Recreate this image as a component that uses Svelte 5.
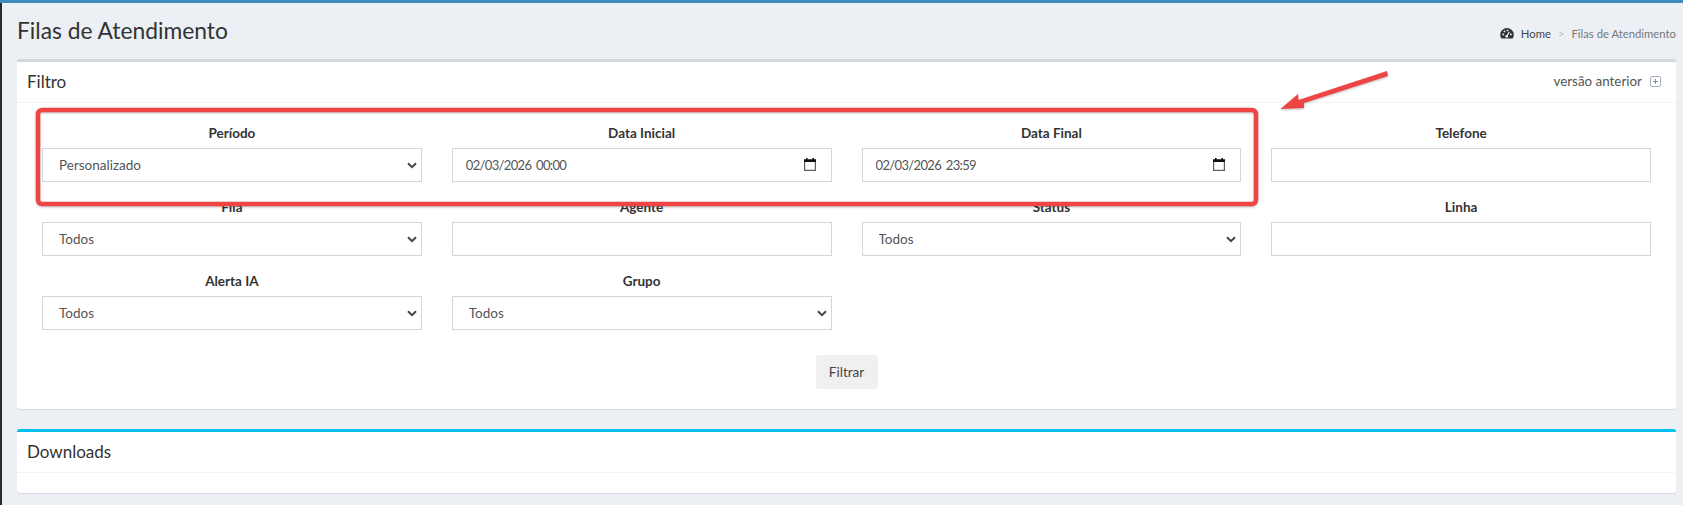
<script>
	const rows = [
		{ label: 'Período', type: 'select', value: 'Personalizado' },
		{ label: 'Data Inicial', type: 'date', value: '02/03/2026 00:00' },
		{ label: 'Data Final', type: 'date', value: '02/03/2026 23:59' },
		{ label: 'Telefone', type: 'text', value: '' },
		{ label: 'Fila', type: 'select', value: 'Todos' },
		{ label: 'Agente', type: 'text', value: '' },
		{ label: 'Status', type: 'select', value: 'Todos' },
		{ label: 'Linha', type: 'text', value: '' },
		{ label: 'Alerta IA', type: 'select', value: 'Todos' },
		{ label: 'Grupo', type: 'select', value: 'Todos' }
	];
</script>

<div class="page">
	<div class="topbar"></div>
	<div class="layout">
		<div class="sidebar"></div>
		<main>
			<header class="content-header">
				<h1>Filas de Atendimento</h1>
				<nav class="breadcrumb">
					<svg class="gauge" viewBox="0 0 16 13" width="14" height="11">
						<path fill="#333" d="M8 0a8 8 0 0 0-7 11.9c.2.4.6.6 1 .6h12c.4 0 .8-.2 1-.6A8 8 0 0 0 8 0z" />
						<circle cx="3.6" cy="7.6" r="1.1" fill="#ecf0f5" />
						<circle cx="5" cy="4" r="1.1" fill="#ecf0f5" />
						<circle cx="8.6" cy="2.8" r="1.1" fill="#ecf0f5" />
						<circle cx="12.6" cy="7.6" r="1.1" fill="#ecf0f5" />
						<path stroke="#ecf0f5" stroke-width="1.4" d="M7.6 10 10.8 4.6" />
						<circle cx="7.6" cy="10" r="1.6" fill="#ecf0f5" />
					</svg>
					<a href="#home">Home</a>
					<span class="sep">&gt;</span>
					<span class="current">Filas de Atendimento</span>
				</nav>
			</header>

			<section class="box filter">
				<div class="box-header">
					<h3>Filtro</h3>
					<div class="tools">
						<span>versão anterior</span>
						<svg viewBox="0 0 11 11" width="11" height="11">
							<rect x="0.5" y="0.5" width="10" height="10" rx="1.5" fill="none" stroke="#a9b0c0" />
							<path d="M3 5.5h5M5.5 3v5" stroke="#8a8f9c" />
						</svg>
					</div>
				</div>
				<div class="box-body">
					<div class="grid">
						{#each rows as row}
							<div class="field">
								<span class="label">{row.label}</span>
								{#if row.type === 'select'}
									<div class="select">
										<select>
											<option>{row.value}</option>
										</select>
										<svg viewBox="0 0 10 7" width="10" height="7">
											<path d="M1 1.2 5 5.2 9 1.2" fill="none" stroke="#444" stroke-width="2" />
										</svg>
									</div>
								{:else if row.type === 'date'}
									<div class="date">
										<input type="text" value={row.value} />
										<svg viewBox="0 0 12 13" width="12" height="13">
											<path fill="#5f5f5f" d="M0 2h12v11H0zM1.2 4v7.8h9.6V4z" />
											<path fill="#111" d="M2 0h1.6v1.2h4.8V0H10v1.2h2V4H0V1.2h2z" />
										</svg>
									</div>
								{:else}
									<input type="text" value={row.value} />
								{/if}
							</div>
						{/each}
					</div>
					<div class="actions">
						<button>Filtrar</button>
					</div>
				</div>
			</section>

			<section class="box downloads">
				<div class="box-header">
					<h3>Downloads</h3>
				</div>
				<div class="box-empty"></div>
			</section>
		</main>
	</div>

	<!-- anotacao vermelha por cima da tela -->
	<svg class="annotation" width="1683" height="505" viewBox="0 0 1683 505">
		<rect x="38" y="110" width="1218" height="94" rx="4" fill="none" stroke="#ef4444" stroke-width="4.5" />
		<path fill="#ef4444" d="M1387 71 1388 76 1304 103 1304 108 1280.5 109 1298 94 1298.5 100z" />
	</svg>
</div>

<style>
	:global(body) {
		margin: 0;
		background: #ecf0f5;
		font-family: "Lato", "Liberation Sans", sans-serif;
		color: #333;
	}

	.page {
		position: relative;
		height: 505px;
		overflow: hidden;
	}

	.topbar {
		height: 3px;
		background: #3c8dbc;
	}

	.layout {
		display: flex;
		height: 502px;
	}

	.sidebar {
		width: 2px;
		background: #222d32;
	}

	main {
		flex: 1;
		padding: 0 7px 0 15px;
		min-width: 0;
	}

	.content-header {
		display: flex;
		justify-content: space-between;
		align-items: center;
		box-sizing: border-box;
		height: 56px;
		padding-bottom: 2px;
	}

	h1 {
		margin: 0;
		font-size: 22.8px;
		font-weight: 400;
		line-height: 1;
	}

	.breadcrumb {
		display: flex;
		align-items: center;
		font-size: 11.3px;
		padding-top: 6px;
	}

	.breadcrumb a {
		color: #444;
		text-decoration: none;
		margin-left: 7px;
	}

	.sep {
		color: #bbb;
		margin: 0 7px;
	}

	.current {
		color: #777;
	}

	.box {
		background: #fff;
		border-top: 3px solid #d2d6de;
		border-radius: 3px;
		box-shadow: 0 1px 1px rgba(0, 0, 0, 0.1);
	}

	.box-header {
		display: flex;
		justify-content: space-between;
		align-items: center;
		box-sizing: content-box;
		height: 38px;
		padding: 0 15px 2px 10px;
		border-bottom: 1px solid #f4f4f4;
	}

	h3 {
		margin: 0;
		font-size: 17px;
		font-weight: 400;
		line-height: 1;
	}

	.tools {
		display: flex;
		align-items: center;
		gap: 8px;
		font-size: 13.4px;
		color: #555;
	}

	.box-body {
		padding: 20px 25px 20px;
	}

	.grid {
		display: grid;
		grid-template-columns: repeat(4, 1fr);
		column-gap: 30px;
		row-gap: 15px;
	}

	.field {
		display: flex;
		flex-direction: column;
	}

	.label {
		font-size: 13.5px;
		font-weight: 700;
		line-height: 20px;
		text-align: center;
		margin-bottom: 5px;
		color: #333;
	}

	select,
	input {
		display: block;
		box-sizing: border-box;
		width: 100%;
		height: 34px;
		border: 1px solid #d2d6de;
		border-radius: 0;
		background: #fff;
		font-family: inherit;
		font-size: 13.5px;
		color: #555;
		outline: none;
	}

	select {
		appearance: none;
		padding: 6px 16px;
	}

	input {
		padding: 6px 13px;
	}

	.select,
	.date {
		position: relative;
	}

	.select svg {
		position: absolute;
		right: 5px;
		top: 14px;
		pointer-events: none;
	}

	.date input {
		font-size: 13px;
		letter-spacing: -0.65px;
		word-spacing: 2px;
	}

	.date svg {
		position: absolute;
		right: 16px;
		top: 10px;
	}

	.actions {
		display: flex;
		justify-content: center;
		margin-top: 25px;
	}

	button {
		width: 62px;
		height: 34px;
		border: 1px solid #f0f0f0;
		border-radius: 3px;
		background: #f0f0f0;
		font-family: inherit;
		font-size: 13.5px;
		color: #444;
	}

	.downloads {
		margin-top: 20px;
		border-top-color: #00c0ef;
	}

	.box-empty {
		height: 20px;
	}

	.annotation {
		position: absolute;
		left: 0;
		top: 0;
		pointer-events: none;
		filter: drop-shadow(0 1px 1px rgba(0, 0, 0, 0.25));
	}
</style>
